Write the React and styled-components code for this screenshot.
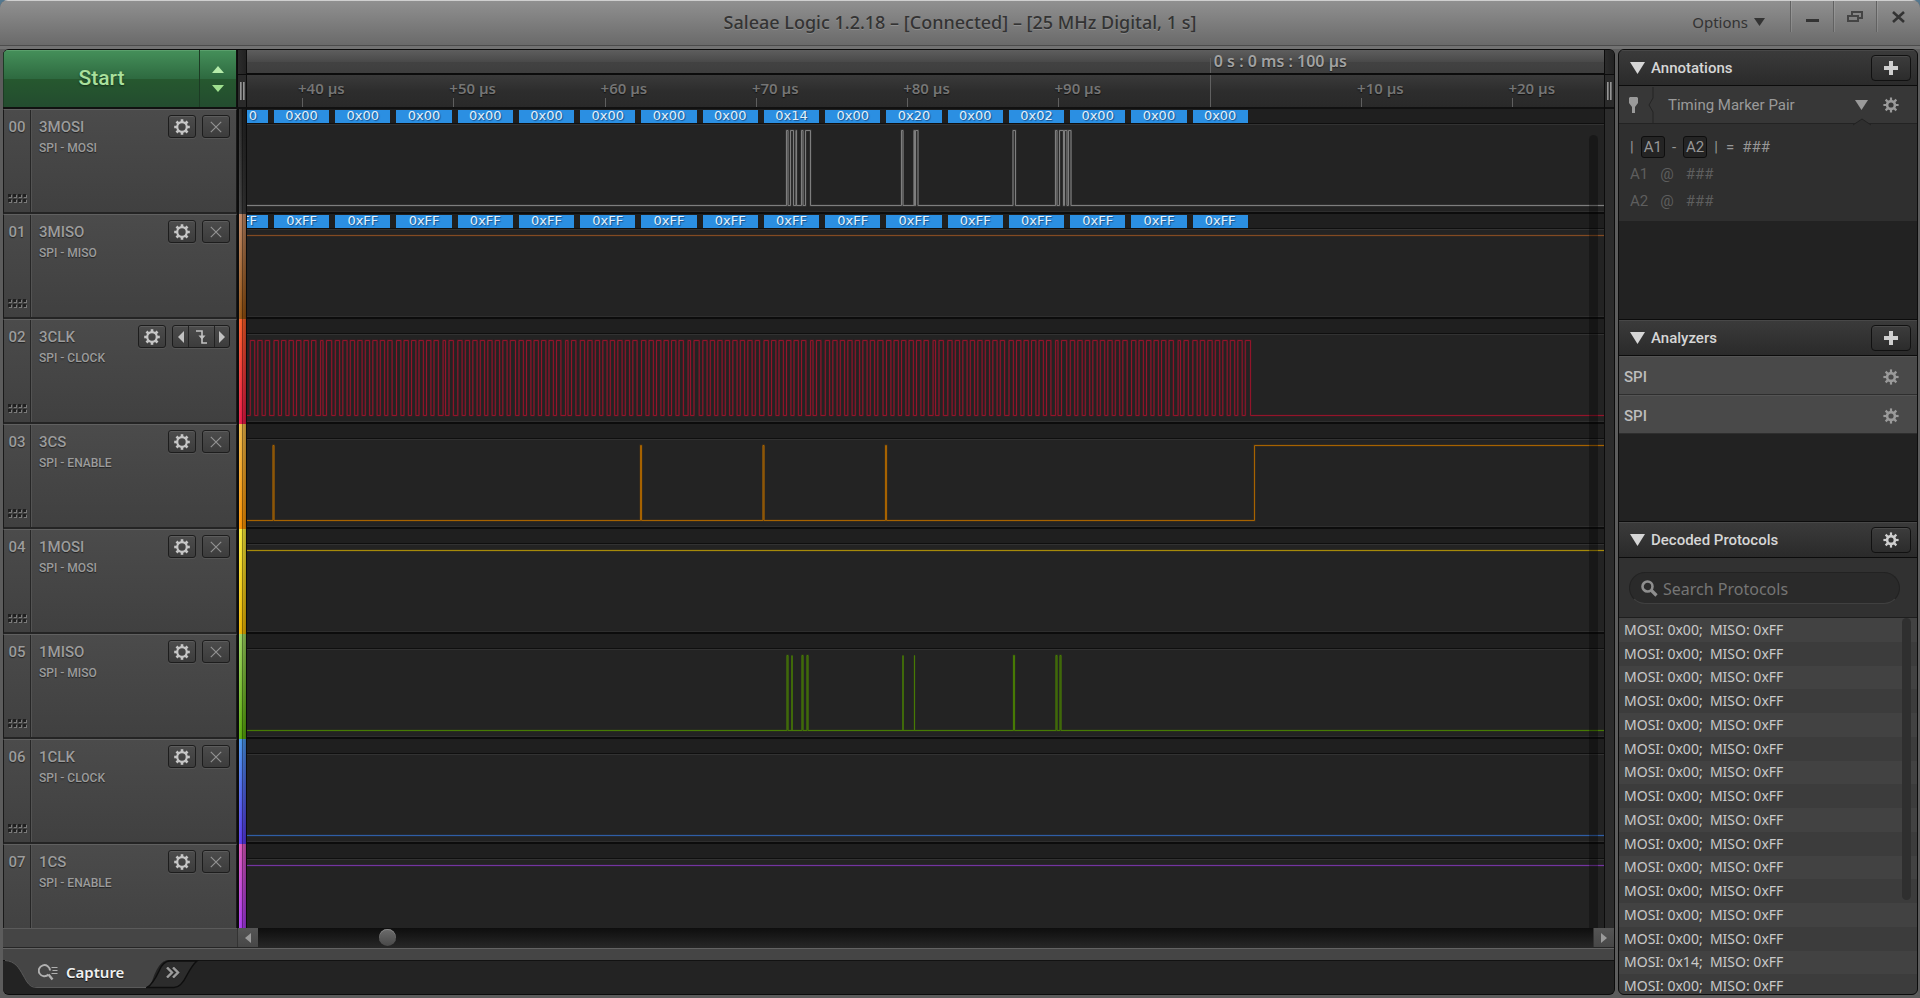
import React from "react";
import styled, { createGlobalStyle, css } from "styled-components";

const GlobalStyle = createGlobalStyle`
  * { box-sizing: border-box; }
  html, body, #root { height: 100%; }
  body { margin: 0; background: #54788f; font-family: Roboto, "Liberation Sans", sans-serif; overflow: hidden; }
  button { font: inherit; color: inherit; padding: 0; border: 0; background: none; }
  h1, h2, p, ul { margin: 0; padding: 0; font-weight: inherit; }
  ul { list-style: none; }
  svg { display: block; }
`;

const humanist = `"Noto Sans", "Open Sans", sans-serif`;

/* ---------- window frame ---------- */

const Window = styled.div`
  height: 100vh;
  display: flex;
  flex-direction: column;
  background: #5c5c5c;
  border-radius: 8px 8px 0 0;
  overflow: hidden;
`;

const TitleBar = styled.header`
  flex: none;
  height: 46px;
  display: grid;
  grid-template-columns: 1fr auto 1fr;
  background: linear-gradient(#909090, #6a6a6a);
  border-top: 1px solid #cfcfcf;
  border-bottom: 1px solid #4c4c4c;
  color: #333;
  font-family: ${humanist};
  text-shadow: 0 1px 0 rgba(255, 255, 255, 0.18);
`;

const WindowTitle = styled.h1`
  grid-column: 2;
  font-size: 18px;
  line-height: 43px;
  font-weight: 500;
`;

const WindowTools = styled.div`
  display: flex;
  justify-content: flex-end;
  align-items: flex-start;
  padding-right: 1px;
`;

const OptionsButton = styled.button`
  display: flex;
  align-items: center;
  gap: 6px;
  height: 41px;
  margin-right: 25px;
  font-size: 15px;
`;

const WindowButton = styled.button`
  width: 43px;
  height: 31px;
  display: grid;
  place-items: center;
  border-left: 1px solid #616161;
  box-shadow: inset 1px 0 0 rgba(255, 255, 255, 0.12);
`;

const Main = styled.main`
  flex: 1;
  min-height: 0;
  display: flex;
  gap: 3px;
  padding: 0 2px 3px 3px;
  border-top: 3px solid #727272;
`;

/* ---------- workspace ---------- */

const Workspace = styled.section`
  flex: 1;
  min-width: 0;
  display: flex;
  flex-direction: column;
  border: 1px solid #0c0c0c;
  border-left: 0;
  border-radius: 6px;
  background: #232323;
  overflow: hidden;
`;

const Upper = styled.div`
  flex: 1;
  min-height: 0;
  display: flex;
`;

const Capture = styled.div`
  position: relative;
  flex: 1;
  min-width: 0;
  display: flex;
  flex-direction: column;
  overflow: hidden;
`;

const laneGrid = css`
  display: grid;
  grid-template-columns: 234px 9px minmax(0, 1fr);
`;

const RulerRow = styled.div`
  ${laneGrid}
  flex: none;
  height: 59px;
  border-bottom: 2px solid #111;
`;

const StartGroup = styled.div`
  display: grid;
  grid-template-columns: minmax(0, 1fr) 37px;
  background: linear-gradient(#45905a, #2e6a40 50%, #26582f 51%, #234c2f);
  box-shadow: inset 0 1px 0 #5aa06c;
  border-left: 1px solid #1c3b24;
  border-right: 1px solid #111;
`;

const StartButton = styled.button`
  padding-bottom: 2px;
  color: #a9e09c;
  font-size: 21px;
  font-weight: 500;
  text-shadow: 0 1px 2px rgba(0, 0, 0, 0.5);
`;

const StepButtons = styled.div`
  display: flex;
  flex-direction: column;
  align-items: center;
  justify-content: center;
  gap: 12px;
  border-left: 1px solid #1c3b24;
`;

const GutterHead = styled.div`
  display: flex;
  flex-direction: column;
  border: solid #0c0c0c;
  border-width: 0 0 0 1px;
`;

const GutterCap = styled.div`
  height: 25px;
  border-bottom: 1px solid #0c0c0c;
  background: linear-gradient(90deg, #2c2c2c, #222);
`;

const GutterHandle = styled.div`
  flex: 1;
  display: flex;
  justify-content: center;
  align-items: center;
  gap: 1px;
  background: #2a2a2a;
`;

const HandleBar = styled.i`
  width: 2px;
  height: 18px;
  background: linear-gradient(90deg, #a8a8a8, #5a5a5a);
`;

const Ruler = styled.div`
  display: flex;
  flex-direction: column;
  overflow: hidden;
  border-left: 1px solid #0c0c0c;
  font-family: ${humanist};
  font-weight: 600;
`;

const RulerStrip = styled.div`
  display: flex;
  padding-left: 55px;
  overflow: hidden;
  ${(p) =>
    p.$major
      ? css`
          height: 25px;
          background: linear-gradient(#5e5e5e, #4a4a4a 50%, #424242 51%, #3e3e3e);
          border-bottom: 2px solid #0c0c0c;
        `
      : css`
          flex: 1;
          background: linear-gradient(#3a3a3a, #2d2d2d 50%, #292929);
        `}
`;

const Tick = styled.div`
  flex: 0 0 calc((100% + 55px) * 0.1115);
  display: flex;
  flex-direction: column;
  justify-content: flex-end;
  color: #757575;
  font-size: 15px;
  line-height: 20px;
  white-space: nowrap;
  text-shadow: 0 1px 1px #111;
`;

const TickLabel = styled.span`
  margin-left: -4px;
`;

const TickMark = styled.i`
  width: 1px;
  height: 9px;
  background: #5f5f5f;
`;

const MajorLine = styled.i`
  width: 1px;
  height: ${(p) => p.$height};
  background: #606060;
`;

const MajorLabel = styled.div`
  display: flex;
  align-items: flex-end;
  gap: 3px;
  color: #a2a2a2;
  font-size: 16px;
  line-height: 24px;
  white-space: nowrap;
  text-shadow: 0 1px 1px #222;
`;

const Channels = styled.div`
  flex: 1;
  min-height: 0;
  overflow: hidden;
`;

const Channel = styled.article`
  ${laneGrid}
  height: 105px;
`;

const ChannelCard = styled.div`
  display: grid;
  grid-template-columns: 27px minmax(0, 1fr);
  background: linear-gradient(#4b4b4b, #404040);
  border: 1px solid #191919;
  border-top-color: #606060;
  border-bottom: 2px solid #242424;
  color: #9c9c9c;
  text-shadow: 0 1px 1px #222;
`;

const ChannelNumber = styled.div`
  display: flex;
  flex-direction: column;
  justify-content: space-between;
  align-items: center;
  padding: 7px 0 9px;
  border-right: 1px solid #262626;
  font-size: 15px;
  line-height: 20px;
  font-weight: 500;
`;

const ChannelBody = styled.div`
  display: flex;
  justify-content: space-between;
  align-items: flex-start;
  padding: 5px 6px 0 8px;
  box-shadow: inset 1px 0 0 #535353;
`;

const ChannelText = styled.div`
  padding-top: 2px;
  font-size: 12px;
  line-height: 23px;
  font-weight: 500;
`;

const ChannelName = styled.h2`
  font-size: 15px;
  line-height: 20px;
  font-weight: 500;
`;

const ChannelTools = styled.div`
  display: flex;
  gap: 6px;
`;

const ToolButton = styled.button`
  width: 28px;
  height: 23px;
  display: grid;
  place-items: center;
  border: 1px solid #1d1d1d;
  border-radius: 3px;
  background: linear-gradient(#4c4c4c, #3c3c3c);
  box-shadow: inset 0 1px 0 #5c5c5c, 0 1px 0 #555;
  color: ${(p) => (p.$dim ? "#929292" : "#c6c6c6")};
`;

const EdgeGroup = styled.div`
  display: flex;
  width: 58px;
  height: 23px;
  border: 1px solid #1d1d1d;
  border-radius: 3px;
  background: linear-gradient(#4c4c4c, #3c3c3c);
  box-shadow: inset 0 1px 0 #5c5c5c, 0 1px 0 #555;
  color: #c2c2c2;
`;

const EdgeButton = styled.button`
  flex: ${(p) => (p.$wide ? "1" : "0 0 15px")};
  display: grid;
  place-items: center;
  & + & { border-left: 1px solid #222; }
`;

const ColorStrip = styled.div`
  border-left: 2px solid #0c0c0c;
  background:
    linear-gradient(90deg, rgba(255, 255, 255, 0.1), rgba(0, 0, 0, 0.05) 40%, rgba(0, 0, 0, 0.45) 50%, rgba(0, 0, 0, 0.2) 60%, rgba(0, 0, 0, 0.32)),
    linear-gradient(${(p) => p.$colors[0]}, ${(p) => p.$colors[1]});
`;

const Lane = styled.div`
  min-width: 0;
  display: flex;
  flex-direction: column;
  background: #232323;
  border-left: 1px solid #0c0c0c;
  border-bottom: 2px solid #0c0c0c;
`;

const LaneHead = styled.div`
  flex: none;
  height: 15px;
  padding-top: 1px;
  background: #1f1f1f;
  border-bottom: 1px solid #0f0f0f;
`;

const Bubbles = styled.div`
  width: 73.75%;
  height: 13px;
  display: flex;
  gap: 6px;
`;

const Bubble = styled.span`
  flex: 1;
  min-width: 0;
  display: flex;
  justify-content: center;
  background: #2b8fe2;
  color: #e4f1fb;
  font: 13px/12px "DejaVu Sans", sans-serif;
  text-shadow: 1px 1px 1px #15508a;
  ${(p) => p.$cut && css`
    flex: 0 0 21px;
    justify-content: flex-end;
    padding-right: 11px;
    overflow: hidden;
  `}
`;

const WaveBox = styled.div`
  flex: 1;
  min-height: 0;
  border-top: 1px solid #323232;
  border-bottom: 1px solid #2e2e2e;
  overflow: hidden;
`;

const Wave = styled.svg`
  width: 100%;
  height: 86px;
`;

const LaneScroll = styled.div`
  position: absolute;
  right: 6px;
  top: 85px;
  bottom: 0;
  width: 9px;
  border-radius: 5px 5px 0 0;
  background: rgba(0, 0, 0, 0.3);
`;

const RightGutter = styled.div`
  flex: none;
  width: 10px;
  display: flex;
  flex-direction: column;
  border-left: 1px solid #0c0c0c;
  background: #2c2c2c;
`;

const RightHandle = styled(GutterHandle)`
  flex: 0 0 34px;
  border-bottom: 2px solid #111;
`;

/* ---------- time scroll bar and tabs ---------- */

const ScrollRow = styled.div`
  flex: none;
  height: 20px;
  display: grid;
  grid-template-columns: 234px 21px minmax(0, 1fr) 21px;
  background: #454545;
  border-bottom: 1px solid #262626;
  box-shadow: inset 0 1px 0 #5a5a5a;
`;

const ScrollArrow = styled.button`
  grid-column: ${(p) => p.$col};
  display: grid;
  place-items: center;
  background: linear-gradient(#555, #474747);
  color: #9a9a9a;
  border-left: 1px solid #333;
`;

const TimeSlider = styled.input`
  appearance: none;
  width: 100%;
  height: 100%;
  margin: 0;
  background: linear-gradient(#0e0e0e, #262626);
  &::-webkit-slider-thumb {
    appearance: none;
    width: 17px;
    height: 17px;
    border-radius: 50%;
    background: linear-gradient(#6c6c6c, #484848);
    box-shadow: inset 0 1px 0 #858585;
  }
`;

const BottomStrip = styled.div`
  flex: none;
  height: 12px;
  background: #454545;
  border-top: 1px solid #636363;
`;

const Tabs = styled.nav`
  flex: none;
  height: 34px;
  display: flex;
  align-items: flex-start;
  background: #232323;
  box-shadow: inset 0 1px 0 #121212;
`;

const Tab = styled.button`
  position: relative;
  height: 24px;
  width: ${(p) => (p.$more ? "44px" : "152px")};
  display: flex;
  align-items: center;
  gap: 8px;
  padding-left: ${(p) => (p.$more ? "11px" : "35px")};
  color: ${(p) => (p.$more ? "#9c9c9c" : "#f0f0f0")};
  font: 600 15px/24px ${humanist};
  text-shadow: 0 1px 1px #111;
`;

const TabShape = styled.svg`
  position: absolute;
  left: ${(p) => p.$left};
  top: 0;
`;

const TabContent = styled.span`
  position: relative;
`;

/* ---------- sidebar ---------- */

const Sidebar = styled.aside`
  flex: none;
  width: 300px;
  display: flex;
  flex-direction: column;
  border: 1px solid #0c0c0c;
  border-radius: 6px;
  background: #222;
  overflow: hidden;
  color: #d6d6d6;
`;

const Panel = styled.section`
  flex: ${(p) => (p.$grow ? "1" : "none")};
  min-height: ${(p) => p.$min || 0};
  display: flex;
  flex-direction: column;
  overflow: hidden;
`;

const PanelHead = styled.header`
  flex: none;
  height: ${(p) => (p.$first ? "36px" : "37px")};
  display: flex;
  align-items: center;
  gap: 6px;
  padding: 0 6px 0 11px;
  background: linear-gradient(#3b3b3b, #2a2a2a);
  border-top: ${(p) => (p.$first ? "0" : "1px solid #0c0c0c")};
  border-bottom: 1px solid #0c0c0c;
  box-shadow: inset 0 1px 0 #484848;
`;

const PanelTitle = styled.h2`
  flex: 1;
  padding-top: 1px;
  font-size: 15px;
  line-height: 20px;
  font-weight: 500;
`;

const HeadButton = styled.button`
  width: 40px;
  height: 26px;
  display: grid;
  place-items: center;
  border: 1px solid #111;
  border-radius: 4px;
  background: linear-gradient(#3c3c3c, #2c2c2c);
  box-shadow: inset 0 1px 0 #4a4a4a;
  color: #cfcfcf;
`;

const MarkerHead = styled.div`
  height: 38px;
  display: flex;
  align-items: center;
  padding: 0 18px 0 10px;
  background: #373737;
  border-bottom: 1px solid #232323;
  color: #9a9a9a;
  font-size: 15px;
`;

const MarkerDivider = styled.svg`
  margin: 0 14px 0 10px;
`;

const MarkerName = styled.span`
  flex: 1;
`;

const PlainButton = styled.button`
  display: grid;
  place-items: center;
  color: ${(p) => p.$color || "#9a9a9a"};
`;

const MenuSlot = styled.div`
  position: relative;
  margin-right: 15px;
`;

const Notch = styled.svg`
  position: absolute;
  left: -2px;
  top: 18px;
`;

const MarkerBody = styled.div`
  height: 97px;
  padding: 12px 11px 6px;
  display: flex;
  flex-direction: column;
  gap: 5px;
  background: #2f2f2f;
  font-size: 15px;
  line-height: 22px;
`;

const MarkerLine = styled.p`
  display: flex;
  align-items: center;
  gap: ${(p) => (p.$main ? "8px" : "12px")};
  color: ${(p) => (p.$main ? "#979797" : "#5e5e5e")};
`;

const MarkerChip = styled.b`
  margin: 0 -1px;
  padding: 0 2px;
  border: 1px solid #0e0e0e;
  border-radius: 3px;
  background: #242424;
  font-weight: 400;
  line-height: 20px;
`;

const AnalyzerRow = styled.li`
  height: 39px;
  display: flex;
  align-items: center;
  justify-content: space-between;
  padding: 2px 18px 0 5px;
  background: #494949;
  border-top: 1px solid #545454;
  border-bottom: 1px solid #2e2e2e;
  color: #bdbdbd;
  font-size: 15px;
  font-weight: 500;
`;

const SearchArea = styled.div`
  flex: none;
  height: 60px;
  padding: 14px 17px 0 10px;
  background: #313131;
  border-bottom: 1px solid #1e1e1e;
`;

const SearchBox = styled.label`
  height: 32px;
  display: flex;
  align-items: center;
  gap: 5px;
  padding: 1px 0 0 11px;
  border: 1px solid #222;
  border-bottom-color: #404040;
  border-radius: 16px;
  background: #2a2a2a;
  color: #8e8e8e;
`;

const SearchInput = styled.input`
  flex: 1;
  min-width: 0;
  padding: 0;
  border: 0;
  outline: 0;
  background: none;
  color: #ccc;
  font: 16px/20px ${humanist};
  &::placeholder { color: #757575; opacity: 1; }
`;

const ResultBox = styled.div`
  position: relative;
  flex: 1;
  min-height: 0;
  overflow: hidden;
`;

const Results = styled.ul`
  height: 380px;
  display: flex;
  flex-direction: column;
`;

const Result = styled.li`
  flex: 1;
  display: flex;
  align-items: center;
  padding-left: 5px;
  background: #3c3c3c;
  color: #c9c9c9;
  font: 14px/20px ${humanist};
  white-space: pre;
  &:nth-child(odd) { background: #424242; }
`;

const ResultScroll = styled.div`
  position: absolute;
  top: 0;
  right: 6px;
  width: 9px;
  height: 75%;
  border-radius: 5px;
  background: #2f2f2f;
`;

/* ---------- icons ---------- */

const TEETH = [0, 45, 90, 135, 180, 225, 270, 315];

const Gear = () => (
  <svg width="16" height="16" viewBox="0 0 16 16" fill="none" stroke="currentColor">
    <circle cx="8" cy="8" r="4.8" strokeWidth="2.2" />
    {TEETH.map((a) => (
      <path key={a} d="M8 .2V3.4" strokeWidth="2.6" transform={`rotate(${a} 8 8)`} />
    ))}
  </svg>
);

const SmallGear = () => (
  <svg width="16" height="16" viewBox="0 0 16 16" fill="none" stroke="currentColor">
    <circle cx="8" cy="8" r="3.9" strokeWidth="2.6" />
    {TEETH.map((a) => (
      <path key={a} d="M8 .4V3.6" strokeWidth="2.2" transform={`rotate(${a} 8 8)`} />
    ))}
  </svg>
);

const Cross = () => (
  <svg width="12" height="12" viewBox="0 0 12 12" stroke="currentColor" strokeWidth="1.2">
    <path d="M.8.8l10.4 10.4M11.2.8L.8 11.2" />
  </svg>
);

const Triangle = ({ w, h, dir = "down" }) => (
  <svg width={w} height={h} fill="currentColor">
    <path
      d={{
        down: `M0 0H${w}L${w / 2} ${h}Z`,
        up: `M0 ${h}H${w}L${w / 2} 0Z`,
        left: `M${w} 0V${h}L0 ${h / 2}Z`,
        right: `M0 0V${h}L${w} ${h / 2}Z`,
      }[dir]}
    />
  </svg>
);

const Plus = () => (
  <svg width="14" height="14" fill="currentColor">
    <path d="M5 0h4v5h5v4H9v5H5V9H0V5h5z" />
  </svg>
);

const FallingEdge = () => (
  <svg width="12" height="14" fill="none" stroke="currentColor" strokeWidth="1.6">
    <path d="M0 1H6V13H11" />
    <path d="M2.5 5.5h7L6 9.5z" fill="currentColor" stroke="none" />
  </svg>
);

const Grip = () => (
  <svg width="19" height="9">
    {[0, 5, 10, 15].map((x) =>
      [0, 5].map((y) => (
        <g key={`${x}-${y}`}>
          <rect x={x + 1} y={y + 1} width="3" height="3" fill="#7a7a7a" />
          <rect x={x} y={y} width="3" height="3" fill="#202020" />
        </g>
      ))
    )}
  </svg>
);

const CaptureIcon = () => (
  <svg width="20" height="18" fill="none" stroke="#b0b0b0">
    <path d="M10.5 11.5A5.6 5.6 0 1 1 12 7.6" strokeWidth="1.9" />
    <path d="M10.5 11.5l4 5" strokeWidth="2.4" />
    <path d="M13.5 4.5h6M14.5 7.5h5M13.5 10.5h6" strokeWidth="1.2" />
  </svg>
);

/* ---------- signals ---------- */

const HI = 5.5;
const LO = 80.5;
const ORIGIN = 247;
const LANE_WIDTH = 1357;

const signalPath = (start, edges) => {
  let level = start;
  let d = `M0 ${level}`;
  edges.forEach((x) => {
    level = level === HI ? LO : HI;
    d += `H${(x - ORIGIN).toFixed(1)}V${level}`;
  });
  return `${d}H${LANE_WIDTH}`;
};

const clockEdges = () => {
  const out = [];
  for (let byte = -1; byte < 16; byte++) {
    for (let bit = 0; bit < 8; bit++) {
      const x = 274 + byte * 61.25 + bit * 7.5;
      if (x < 249) continue;
      const late = bit === 6 && byte % 2 === 0;
      const width = late ? 2.4 : bit === 7 && byte % 3 === 0 ? 5.2 : 4.4;
      out.push(late ? x + 1.6 : x, (late ? x + 1.6 : x) + width);
    }
  }
  return out;
};

const pulses = (list, w) => list.flatMap((x) => [x, x + w]);

const MOSI_BYTES = ["0", "0x00", "0x00", "0x00", "0x00", "0x00", "0x00", "0x00", "0x00", "0x14", "0x00", "0x20", "0x00", "0x02", "0x00", "0x00", "0x00"];
const MISO_BYTES = MOSI_BYTES.map((_, i) => (i ? "0xFF" : "FF"));

const CHANNELS = [
  { name: "3MOSI", role: "SPI - MOSI", strip: ["#242424", "#3a3a3a"], color: "#7e7e7e", bytes: MOSI_BYTES,
    path: signalPath(LO, [786.5, 788, 790.5, 793.5, 796, 796.5, 801.5, 803, 805.5, 810.5, 901.5, 903, 914, 914.5, 915.5, 918, 1013, 1015.5, 1055.5, 1057, 1059.5, 1063.5, 1064.5, 1067, 1068.5, 1071]) },
  { name: "3MISO", role: "SPI - MISO", strip: ["#c08866", "#95520f"], color: "#824a22", bytes: MISO_BYTES, path: signalPath(HI, []) },
  { name: "3CLK", role: "SPI - CLOCK", strip: ["#ff5f28", "#ee1848"], color: "#93142a", clock: true, path: signalPath(LO, clockEdges()) },
  { name: "3CS", role: "SPI - ENABLE", strip: ["#f5bd4a", "#ff9400"], color: "#a66200",
    path: signalPath(LO, [...pulses([273, 640.5, 763, 885.5], 1), 1254.5]) },
  { name: "1MOSI", role: "SPI - MOSI", strip: ["#fff23c", "#f2b800"], color: "#a68a0a", path: signalPath(HI, []) },
  { name: "1MISO", role: "SPI - MISO", strip: ["#a0d860", "#58ac08"], color: "#467a04",
    path: signalPath(LO, [...pulses([787], 1), ...pulses([792], 0), ...pulses([802, 807], 1), ...pulses([903, 914.5], 0), ...pulses([1013.5, 1056, 1060], 1)]) },
  { name: "1CLK", role: "SPI - CLOCK", strip: ["#4a9af0", "#5a38f0"], color: "#2f5ea6", path: signalPath(LO, []) },
  { name: "1CS", role: "SPI - ENABLE", strip: ["#e058c0", "#a032ff"], color: "#7434a0", path: signalPath(HI, []) },
];

const TICKS = ["+40 µs", "+50 µs", "+60 µs", "+70 µs", "+80 µs", "+90 µs", null, "+10 µs", "+20 µs"];

const RESULTS = Array.from({ length: 16 }, (_, i) => `MOSI: ${i === 14 ? "0x14" : "0x00"};  MISO: 0xFF`);

function ChannelRow({ index, data }) {
  return (
    <Channel>
      <ChannelCard>
        <ChannelNumber>
          <span>{`0${index}`}</span>
          <Grip />
        </ChannelNumber>
        <ChannelBody>
          <ChannelText>
            <ChannelName>{data.name}</ChannelName>
            {data.role}
          </ChannelText>
          <ChannelTools>
            <ToolButton aria-label={`${data.name} settings`}><Gear /></ToolButton>
            {data.clock ? (
              <EdgeGroup>
                <EdgeButton aria-label="Previous edge"><Triangle w={6} h={12} dir="left" /></EdgeButton>
                <EdgeButton $wide aria-label="Falling edge"><FallingEdge /></EdgeButton>
                <EdgeButton aria-label="Next edge"><Triangle w={6} h={12} dir="right" /></EdgeButton>
              </EdgeGroup>
            ) : (
              <ToolButton $dim aria-label={`${data.name} trigger`}><Cross /></ToolButton>
            )}
          </ChannelTools>
        </ChannelBody>
      </ChannelCard>
      <ColorStrip $colors={data.strip} />
      <Lane>
        <LaneHead>
          {data.bytes && (
            <Bubbles>
              {data.bytes.map((b, i) => <Bubble key={i} $cut={i === 0}>{b}</Bubble>)}
            </Bubbles>
          )}
        </LaneHead>
        <WaveBox>
          <Wave viewBox={`0 0 ${LANE_WIDTH} 86`} preserveAspectRatio="none" fill="none" stroke={data.color}>
            <path d={data.path} strokeWidth="2" opacity="0.25" />
            <path d={data.path} />
          </Wave>
        </WaveBox>
      </Lane>
    </Channel>
  );
}

export default function App() {
  return (
    <Window>
      <GlobalStyle />
      <TitleBar>
        <WindowTitle>Saleae Logic 1.2.18 – [Connected] – [25 MHz Digital, 1 s]</WindowTitle>
        <WindowTools>
          <OptionsButton>Options <Triangle w={11} h={8} /></OptionsButton>
          <WindowButton aria-label="Minimize">
            <svg width="13" height="14"><rect y="9" width="13" height="3" fill="#333" /></svg>
          </WindowButton>
          <WindowButton aria-label="Restore">
            <svg width="16" height="12" fill="none" stroke="#444" strokeWidth="2">
              <path d="M5 4V1H15V7H11" />
              <rect x="1" y="5" width="10" height="5" />
            </svg>
          </WindowButton>
          <WindowButton aria-label="Close">
            <svg width="13" height="12" stroke="#333" strokeWidth="2.6"><path d="M1 1l11 10M12 1L1 11" /></svg>
          </WindowButton>
        </WindowTools>
      </TitleBar>
      <Main>
        <Workspace>
          <Upper>
            <Capture>
              <RulerRow>
                <StartGroup>
                  <StartButton>Start</StartButton>
                  <StepButtons>
                    <PlainButton $color="#b5ecaa" aria-label="More"><Triangle w={12} h={7} dir="up" /></PlainButton>
                    <PlainButton $color="#9fe08f" aria-label="Less"><Triangle w={12} h={7} /></PlainButton>
                  </StepButtons>
                </StartGroup>
                <GutterHead>
                  <GutterCap />
                  <GutterHandle><HandleBar /><HandleBar /></GutterHandle>
                </GutterHead>
                <Ruler>
                  <RulerStrip $major>
                    {TICKS.slice(0, 6).map((t) => <Tick key={t} />)}
                    <MajorLabel><MajorLine $height="15px" />0 s : 0 ms : 100 µs</MajorLabel>
                  </RulerStrip>
                  <RulerStrip>
                    {TICKS.map((t, i) => (
                      <Tick key={i}>
                        {t ? <><TickLabel>{t}</TickLabel><TickMark /></> : <MajorLine $height="100%" />}
                      </Tick>
                    ))}
                  </RulerStrip>
                </Ruler>
              </RulerRow>
              <Channels>
                {CHANNELS.map((c, i) => <ChannelRow key={c.name} index={i} data={c} />)}
              </Channels>
              <LaneScroll />
            </Capture>
            <RightGutter>
              <GutterCap />
              <RightHandle><HandleBar /><HandleBar /></RightHandle>
            </RightGutter>
          </Upper>
          <ScrollRow>
            <ScrollArrow $col={2} aria-label="Scroll left"><Triangle w={6} h={10} dir="left" /></ScrollArrow>
            <TimeSlider type="range" min="0" max="1000" defaultValue="92" aria-label="Time position" />
            <ScrollArrow $col={4} aria-label="Scroll right"><Triangle w={6} h={10} dir="right" /></ScrollArrow>
          </ScrollRow>
          <BottomStrip />
          <Tabs>
            <Tab>
              <TabShape $left="0" width="168" height="30">
                <path d="M2 0C12 1 16 8 20 15C24 22 26 27 34 27H143C150 27 148 18 156 6Q160 0 166 0Z" fill="#454545" />
                <path d="M2 .5C12 1 16 8 20 15C24 22 26 27.5 34 27.5H143" fill="none" stroke="#5a5a5a" />
              </TabShape>
              <TabContent><CaptureIcon /></TabContent>
              <TabContent>Capture</TabContent>
            </Tab>
            <Tab $more aria-label="More tabs">
              <TabShape $left="-9px" width="54" height="30">
                <path d="M1 27.5Q7 24 13 11Q17 1 24 1H51Q47 4 41 15Q35 27.5 28 27.5Z" fill="#2c2c2c" stroke="#0e0e0e" strokeWidth="1.5" />
              </TabShape>
              <TabContent>
                <svg width="14" height="11" fill="none" stroke="currentColor" strokeWidth="2.4">
                  <path d="M1 .5l5 5-5 5M7 .5l5 5-5 5" />
                </svg>
              </TabContent>
            </Tab>
          </Tabs>
        </Workspace>

        <Sidebar>
          <Panel $min="269px">
            <PanelHead $first>
              <Triangle w={15} h={12} />
              <PanelTitle>Annotations</PanelTitle>
              <HeadButton aria-label="Add annotation"><Plus /></HeadButton>
            </PanelHead>
            <MarkerHead>
              <svg width="9" height="16" fill="currentColor"><path d="M1 0H8L9 1V6L6 10V16H3V10L0 6V1Z" /></svg>
              <MarkerDivider width="6" height="36" fill="none" stroke="#242424"><path d="M5 0V11L1 18L5 25V36" /></MarkerDivider>
              <MarkerName>Timing Marker Pair</MarkerName>
              <MenuSlot>
                <PlainButton aria-label="Marker menu"><Triangle w={13} h={10} /></PlainButton>
                <Notch width="18" height="8"><path d="M0 7L9 1L18 7V8H0Z" fill="#2f2f2f" /><path d="M0 7L9 1L18 7" fill="none" stroke="#222" /></Notch>
              </MenuSlot>
              <PlainButton aria-label="Marker settings"><SmallGear /></PlainButton>
            </MarkerHead>
            <MarkerBody>
              <MarkerLine $main>
                <span>|</span><MarkerChip>A1</MarkerChip><span>-</span><MarkerChip>A2</MarkerChip><span>|</span><span>=</span><span>###</span>
              </MarkerLine>
              <MarkerLine><span>A1</span><span>@</span><span>###</span></MarkerLine>
              <MarkerLine><span>A2</span><span>@</span><span>###</span></MarkerLine>
            </MarkerBody>
          </Panel>

          <Panel $min="202px">
            <PanelHead>
              <Triangle w={15} h={12} />
              <PanelTitle>Analyzers</PanelTitle>
              <HeadButton aria-label="Add analyzer"><Plus /></HeadButton>
            </PanelHead>
            <ul>
              <AnalyzerRow>SPI<PlainButton aria-label="SPI settings"><SmallGear /></PlainButton></AnalyzerRow>
              <AnalyzerRow>SPI<PlainButton aria-label="SPI settings"><SmallGear /></PlainButton></AnalyzerRow>
            </ul>
          </Panel>

          <Panel $grow>
            <PanelHead>
              <Triangle w={15} h={12} />
              <PanelTitle>Decoded Protocols</PanelTitle>
              <HeadButton aria-label="Protocol settings"><SmallGear /></HeadButton>
            </PanelHead>
            <SearchArea>
              <SearchBox>
                <svg width="17" height="17" fill="none" stroke="currentColor">
                  <circle cx="6.5" cy="6.5" r="5" strokeWidth="2.6" />
                  <path d="M10 10l5.5 5.5" strokeWidth="3.2" />
                </svg>
                <SearchInput type="text" placeholder="Search Protocols" aria-label="Search Protocols" />
              </SearchBox>
            </SearchArea>
            <ResultBox>
              <Results>
                {RESULTS.map((r, i) => <Result key={i}>{r}</Result>)}
              </Results>
              <ResultScroll />
            </ResultBox>
          </Panel>
        </Sidebar>
      </Main>
    </Window>
  );
}
